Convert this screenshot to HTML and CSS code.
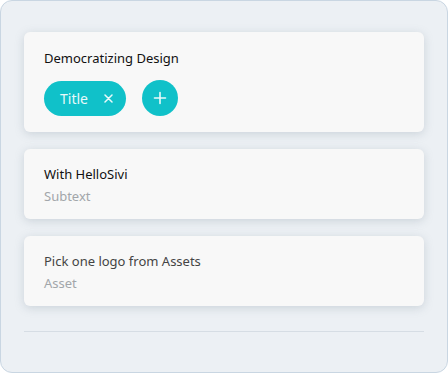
FILE: index.html
```html
<!DOCTYPE html>
<html lang="en">
<head>
  <meta charset="UTF-8" />
  <meta name="viewport" content="width=device-width, initial-scale=1.0" />
  <title>Brand Panel</title>
  <link rel="stylesheet" href="styles.css">
</head>
<body>

  <div class="panel">
    <div class="card card-title">
      <div class="label">Democratizing Design</div>
      <div class="chips">
        <span class="chip">Title
          <svg class="chip-close" width="9" height="9" viewBox="0 0 9 9">
            <path d="M1 1l7 7M8 1l-7 7" stroke="#e9f9fa" stroke-width="1.5" stroke-linecap="round" />
          </svg>
        </span>
        <span class="add">
          <svg width="14" height="14" viewBox="0 0 14 14">
            <path d="M7 1.5v11M1.5 7h11" stroke="#e9f9fa" stroke-width="1.6" stroke-linecap="round" />
          </svg>
        </span>
      </div>
    </div>

    <div class="card">
      <div class="label">With HelloSivi</div>
      <div class="hint">Subtext</div>
    </div>

    <div class="card">
      <div class="label muted">Pick one logo from Assets</div>
      <div class="hint">Asset</div>
    </div>

    <div class="divider"></div>
  </div>

</body>
</html>
```

FILE: styles.css
```css
body {
  margin: 0;
  font-family: 'Noto Sans', 'Open Sans', sans-serif;
  background: #ffffff;
}
.panel {
  width: 448px;
  height: 373px;
  box-sizing: border-box;
  background: #ecf0f4;
  border: 1px solid #c9d6e2;
  border-radius: 12px;
  padding: 31px 23px 0;
  display: flex;
  flex-direction: column;
  gap: 17px;
}
.card {
  background: #f8f8f8;
  border-radius: 6px;
  box-shadow: 0 2px 10px rgba(120, 135, 150, 0.28);
  padding: 15px 20px 13px;
}
.card-title {
  padding: 16px 20px 16px;
}
.label {
  font-size: 13px;
  line-height: 21px;
  color: #111;
}
.label.muted {
  color: #444;
}
.hint {
  font-size: 13px;
  line-height: 21px;
  margin-top: 1px;
  margin-bottom: -1px;
  color: #a2a6aa;
}
.chips {
  display: flex;
  align-items: center;
  gap: 16px;
  margin-top: 11px;
}
.chip {
  height: 35px;
  width: 82px;
  box-sizing: border-box;
  border-radius: 18px;
  background: #10c1c9;
  color: #e9f9fa;
  font-size: 14px;
  padding: 0 13px 0 16px;
  display: flex;
  align-items: center;
  justify-content: space-between;
}
.add {
  width: 36px;
  height: 36px;
  border-radius: 50%;
  background: #10c1c9;
  display: flex;
  align-items: center;
  justify-content: center;
}
.divider {
  height: 1px;
  background: #d6dde4;
  margin-top: 8px;
}
```
